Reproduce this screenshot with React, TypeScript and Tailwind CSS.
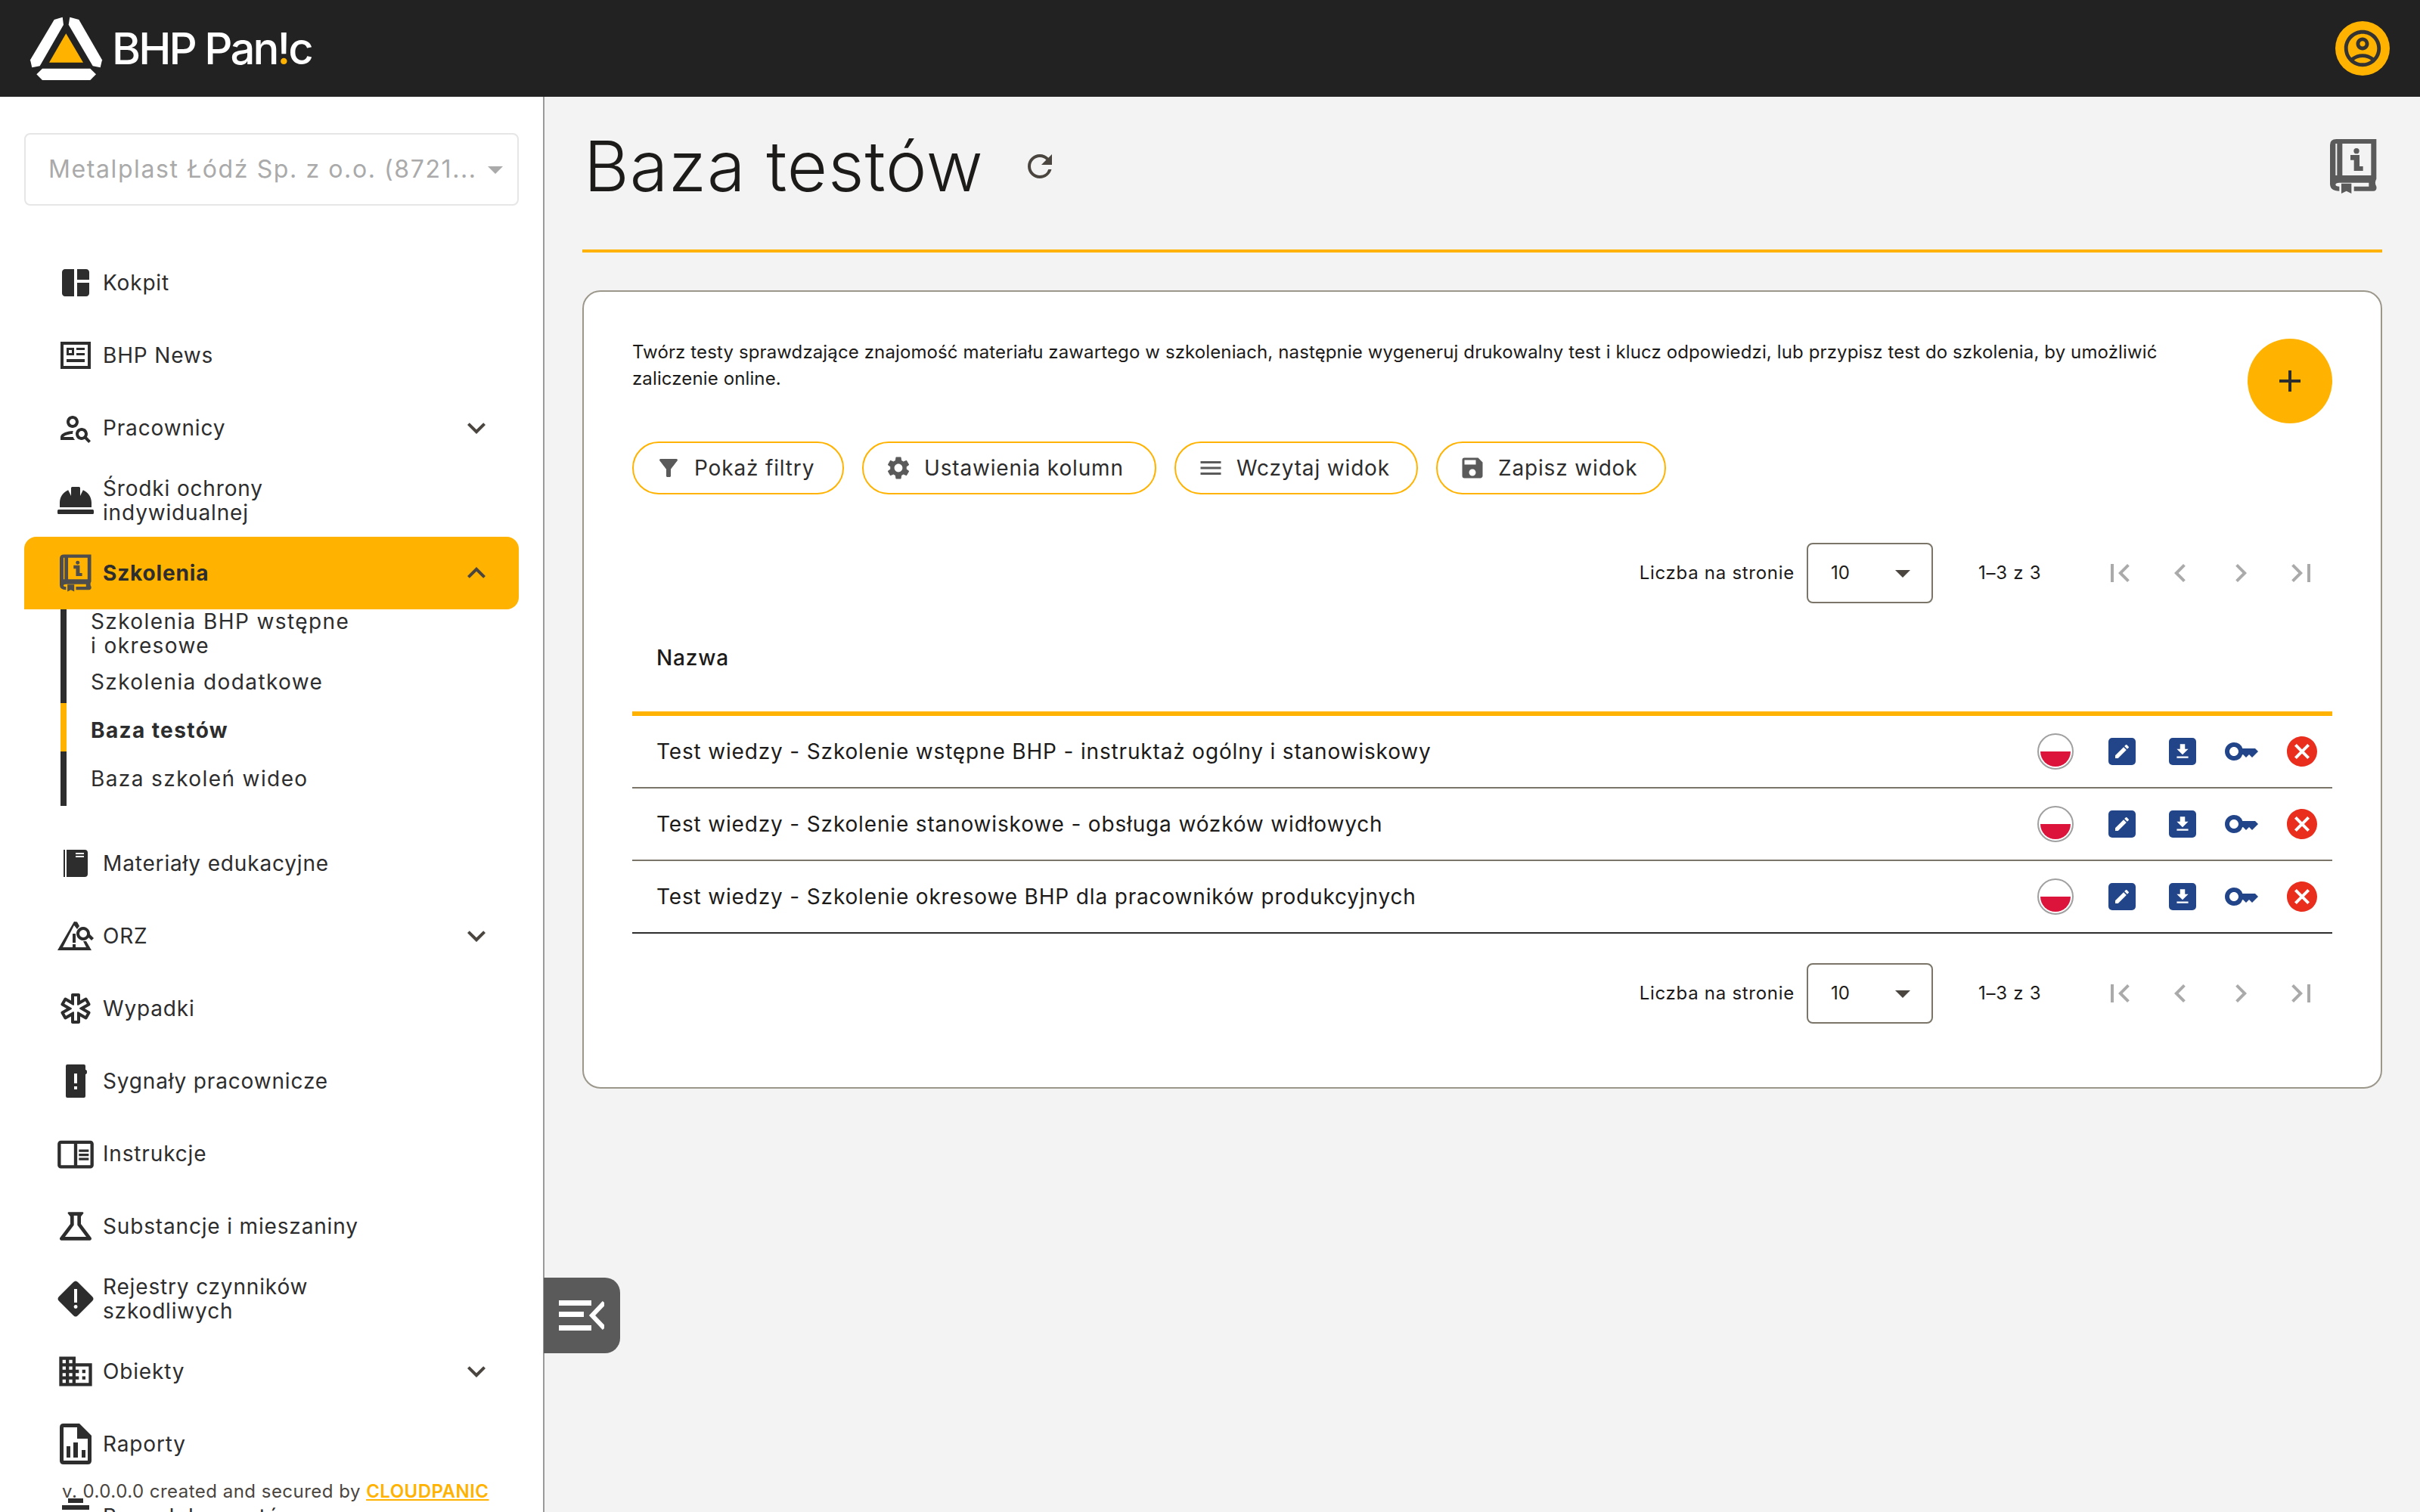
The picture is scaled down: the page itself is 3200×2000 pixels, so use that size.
import React from "react";
import {
  MdSpaceDashboard, MdOutlinePersonSearch, MdOutlineChromeReaderMode, MdOutlineScience, MdDomain,
  MdOutlineEmergency, MdExpandMore, MdExpandLess, MdRefresh, MdFilterAlt, MdSettings, MdMenu, MdSave,
  MdFirstPage, MdLastPage, MdChevronLeft, MdChevronRight, MdEdit, MdFileDownload, MdKey, MdCancel,
  MdArrowDropDown, MdOutlineAccountCircle, MdAdd,
} from "react-icons/md";
import { FaHardHat } from "react-icons/fa";

const BookInfo = ({ className }: { className: string }) => (
  <svg viewBox="543 580 186 220" className={className} fill="currentColor">
    <path
      fillRule="evenodd"
      d="M568 582H727V740Q718 755 727 770Q730 788 715 788H638V770H697V755H580Q565 755 565 763Q565 770 580 770V788Q543 788 543 760V605Q543 582 568 582ZM592 600V726H706V600ZM565 600V726H571V600Z"
    />
    <path d="M588 758H628V798L608 788L588 798Z" />
    <circle cx="648" cy="629" r="11" />
    <path d="M624 645H660V690H674V708H638V665H624Z" />
  </svg>
);

const NewsIcon = () => (
  <svg viewBox="0 0 48 48" className="w-[48px] h-[48px]" fill="currentColor">
    <path fillRule="evenodd" d="M4 6H44V42H4ZM8 10V38H40V10Z" />
    <path fillRule="evenodd" d="M12 14H22V24H12ZM15 17V21H19V17Z" />
    <path d="M25 14H36V17H25ZM25 21H36V24H25ZM12 29H36V33H12Z" />
  </svg>
);

const ManualIcon = () => (
  <svg viewBox="0 0 48 48" className="w-[48px] h-[48px]" fill="currentColor">
    <path d="M8 6H10V42H8Z" />
    <path fillRule="evenodd" d="M12 6H36Q40 6 40 10V38Q40 42 36 42H12ZM24 10V12H35V10ZM24 14V16H35V14Z" />
  </svg>
);

const OrzIcon = () => (
  <svg viewBox="0 0 48 48" className="w-[48px] h-[48px]" fill="currentColor">
    <path d="M22 4L26 4.5L29 10L26 14L22 9L7 38H38L34 30L38 30L45 42H0Z" transform="translate(0 1)" />
    <path d="M20 21H24V33H20ZM20 35H24V39H20Z" />
    <path fillRule="evenodd" d="M34 12A9 9 0 1 1 33.9 12ZM34 16A5 5 0 1 0 34.1 16Z" />
    <path d="M39 24L42 21L48 27L45 30Z" />
  </svg>
);

const SignalIcon = () => (
  <svg viewBox="0 0 48 48" className="w-[48px] h-[48px]" fill="currentColor">
    <path fillRule="evenodd" d="M13 2H35Q37 2 37 4V9Q39 9 39 12Q39 15 37 15V44Q37 46 35 46H13Q11 46 11 44V4Q11 2 13 2ZM22 14V27H26V14ZM22 31V35H26V31Z" />
  </svg>
);

const DiamondIcon = () => (
  <svg viewBox="0 0 48 48" className="w-[48px] h-[48px]" fill="currentColor">
    <path fillRule="evenodd" d="M21 2Q24 -1 27 2L46 21Q49 24 46 27L27 46Q24 49 21 46L2 27Q-1 24 2 21ZM22 11V29H26V11ZM24 32A2.5 2.5 0 1 0 24.1 37A2.5 2.5 0 1 0 24 32Z" />
  </svg>
);

const ReportIcon = () => (
  <svg viewBox="0 0 42 54" className="w-[42px] h-[54px]" fill="currentColor">
    <path fillRule="evenodd" d="M5 0H26L42 16V49Q42 54 37 54H5Q0 54 0 49V5Q0 0 5 0ZM5 5V49H37V20H23V5Z" />
    <path d="M9 30H14V45H9ZM18 25H24V45H18ZM29 35H34V45H29Z" />
  </svg>
);

const StackIcon = () => (
  <svg viewBox="0 0 48 48" className="w-[48px] h-[48px]" fill="currentColor">
    <path d="M14 0H34V6H14ZM6 9H42V15H6ZM0 18H48V24H0Z" />
  </svg>
);

type Item = { label: string; icon: React.ReactNode; chevron?: boolean };

const before: Item[] = [
  { label: "Kokpit", icon: <MdSpaceDashboard size={48} /> },
  { label: "BHP News", icon: <NewsIcon /> },
  { label: "Pracownicy", icon: <MdOutlinePersonSearch size={48} />, chevron: true },
  { label: "Środki ochrony indywidualnej", icon: <FaHardHat size={48} /> },
];

const after: Item[] = [
  { label: "Materiały edukacyjne", icon: <ManualIcon /> },
  { label: "ORZ", icon: <OrzIcon />, chevron: true },
  { label: "Wypadki", icon: <MdOutlineEmergency size={48} /> },
  { label: "Sygnały pracownicze", icon: <SignalIcon /> },
  { label: "Instrukcje", icon: <MdOutlineChromeReaderMode size={52} /> },
  { label: "Substancje i mieszaniny", icon: <MdOutlineScience size={56} /> },
  { label: "Rejestry czynników szkodliwych", icon: <DiamondIcon /> },
  { label: "Obiekty", icon: <MdDomain size={52} />, chevron: true },
  { label: "Raporty", icon: <ReportIcon /> },
  { label: "Baza dokumentów", icon: <StackIcon /> },
];

const NavItem = ({ item }: { item: Item }) => (
  <div className="flex items-center h-[96px] flex-none pl-[32px] pr-[32px] w-[654px] text-[#2d2d2d]">
    <div className="w-[72px] flex-none flex justify-center items-center pr-[0px] -ml-[0px] h-[56px]">{item.icon}</div>
    <span className="ml-[0px] flex-1 text-[28px] leading-[32px] tracking-[0.03em] max-w-[360px]">{item.label}</span>
    {item.chevron && <MdExpandMore size={48} className="ml-auto text-[#4a453f]" />}
  </div>
);

const Pagination = () => (
  <div className="flex items-center justify-end h-[80px] text-[#1c1b19]">
    <span className="text-[24px] tracking-[0.03em] mr-[16px]">Liczba na stronie</span>
    <div className="w-[167px] h-[80px] border-2 border-[#7a7568] rounded-[8px] flex items-center pl-[30px] pr-[14px] justify-between">
      <span className="text-[24px]">10</span>
      <MdArrowDropDown size={48} className="text-[#4a453f]" />
    </div>
    <span className="text-[24px] tracking-[0.03em] ml-[60px] w-[106px]">1–3 z 3</span>
    <div className="flex items-center gap-[32px] text-[#aaaaaa] ml-[57px] mr-[17px]">
      <MdFirstPage size={48} />
      <MdChevronLeft size={48} />
      <MdChevronRight size={48} />
      <MdLastPage size={48} />
    </div>
  </div>
);

const rows = [
  "Test wiedzy - Szkolenie wstępne BHP - instruktaż ogólny i stanowiskowy",
  "Test wiedzy - Szkolenie stanowiskowe - obsługa wózków widłowych",
  "Test wiedzy - Szkolenie okresowe BHP dla pracowników produkcyjnych",
];

const Btn = ({ icon, label, w }: { icon: React.ReactNode; label: string; w: string }) => (
  <button className={`${w} h-[70px] rounded-full border-2 border-[#ffb300] flex items-center pl-[26px] text-[28px] tracking-[0.03em] text-[#1c1b19] text-[#2d2d2d]`}>
    <span className="text-[#5a5a5a] w-[40px] flex-none flex justify-center">{icon}</span>
    <span className="ml-[14px]">{label}</span>
  </button>
);

export default function App() {
  return (
    <div className="w-[3200px] h-[2000px] overflow-hidden flex flex-col bg-[#f3f3f3] font-['Inter',sans-serif] relative">
      <header className="h-[128px] flex-none bg-[#222222] flex items-center pr-[40px]">
        <svg viewBox="0 0 140 128" className="w-[140px] h-[128px] flex-none">
          <path fill="#fff" d="M71.7 26L82.7 22.7L84 32.7L52.7 87.3L42.3 89.3L40 79.3Z" />
          <path fill="#fff" d="M92.3 22.7L104.3 26L135 79.3L132.7 89.3L122.7 87.3L90.7 32.7Z" />
          <path fill="#ffb300" d="M87.3 44.3L110 82.7H65Z" />
          <path fill="#fff" d="M48.3 98.3L56 90.7H119.3L127 98.3L119.3 106H56Z" />
        </svg>
        <div className="ml-[8px] text-white text-[58px] leading-none font-medium tracking-[-0.05em]">
          BHP Pan
          <span className="bg-[linear-gradient(#fff_0,#fff_66%,#ffb300_66%)] bg-clip-text text-transparent">!</span>c
        </div>
        <div className="ml-auto w-[72px] h-[72px] rounded-full bg-[#ffb300] flex items-center justify-center text-[#333333]">
          <MdOutlineAccountCircle size={58} />
        </div>
      </header>

      <div className="flex flex-1 min-h-0 relative">
        <aside className="w-[720px] flex-none bg-white border-r-2 border-[#9a9a9a] overflow-hidden relative flex flex-col pl-[32px]">
          <div className="mt-[48px] w-[654px] h-[96px] flex-none border-2 border-[#e6e6e6] rounded-[8px] flex items-center pl-[30px] pr-[18px] text-[#aaaaaa] text-[32px] tracking-[0.05em]">
            <span className="whitespace-nowrap">Metalplast Łódź Sp. z o.o. (8721...</span>
            <MdArrowDropDown size={48} className="ml-auto text-[#aaaaaa] flex-none" />
          </div>
          <nav className="mt-[54px] flex flex-col">
            {before.map((i) => <NavItem key={i.label} item={i} />)}
            <div className="flex items-center h-[96px] flex-none pl-[32px] pr-[32px] w-[654px] bg-[#ffb300] rounded-t-[16px] rounded-br-[16px] text-[#2d2d2d]">
              <div className="w-[72px] flex-none flex justify-center items-center"><BookInfo className="w-[42px] h-[50px] text-[#4d4d4d]" /></div>
              <span className="text-[28px] font-bold tracking-[0.03em]">Szkolenia</span>
              <MdExpandLess size={48} className="ml-auto text-[#4a453f]" />
            </div>
            <div className="ml-[48px] flex flex-col text-[#2d2d2d] text-[28px] leading-[32px] tracking-[0.05em]">
              <div className="h-[60px] border-l-[8px] border-[#2d2d2d] pl-[32px]">Szkolenia BHP wstępne<br />i okresowe</div>
              <div className="h-[64px] border-l-[8px] border-[#2d2d2d] pl-[32px] flex items-center pt-[8px]">Szkolenia dodatkowe</div>
              <div className="h-[64px] border-l-[8px] border-[#ffb300] pl-[32px] flex items-center pt-[8px] font-bold">Baza testów</div>
              <div className="h-[72px] border-l-[8px] border-[#2d2d2d] pl-[32px] flex items-center">Baza szkoleń wideo</div>
            </div>
            <div className="h-[28px] flex-none" />
            {after.map((i) => <NavItem key={i.label} item={i} />)}
          </nav>
          <div className="absolute left-[82px] top-[1827px] text-[24px] leading-[36px] tracking-[0.02em] text-[#4a453f] whitespace-nowrap">
            v. 0.0.0.0 created and secured by <a className="text-[#ffb300] font-semibold underline">CLOUDPANIC</a>
          </div>
        </aside>

        <div className="absolute left-[719px] top-[1562px] w-[101px] h-[100px] rounded-r-[20px] bg-[#5a5a5a] flex items-center justify-center pr-[2px]">
          <svg viewBox="0 0 60 40" className="w-[60px] h-[40px]" fill="#fff">
            <path d="M0 0H43V7H0ZM0 15H33V22H0ZM0 33H43V40H0Z" />
            <path d="M60 3L44 20L60 37" fill="none" stroke="#fff" strokeWidth="6" />
          </svg>
        </div>

        <main className="flex-1 min-w-0 px-[50px] flex flex-col">
          <div className="h-[206px] flex-none border-b-[4px] border-[#ffb300] flex items-center text-[#1c1b19] pb-[18px]">
            <h1 className="ml-[2px] text-[92px] leading-none font-light tracking-[0.01em]">Baza testów</h1>
            <MdRefresh size={48} className="ml-[50px] text-[#4a453f]" />
            <BookInfo className="ml-auto mr-[7px] w-[62px] h-[74px] text-[#5a5a5a]" />
          </div>

          <section className="mt-[50px] h-[1056px] flex-none bg-white border-2 border-[#9b978b] rounded-[24px] px-[64px] pt-[62px]">
            <div className="flex items-start justify-between">
              <p className="w-[2070px] text-[24px] leading-[35px] tracking-[0.005em] text-[#1c1b19]">
                Twórz testy sprawdzające znajomość materiału zawartego w szkoleniach, następnie wygeneruj drukowalny test i klucz odpowiedzi, lub przypisz test do szkolenia, by umożliwić zaliczenie online.
              </p>
              <button className="w-[112px] h-[112px] rounded-full bg-[#ffb300] flex items-center justify-center text-[#2d2d2d]">
                <MdAdd size={48} />
              </button>
            </div>
            <div className="mt-[24px] flex gap-[24px]">
              <Btn w="w-[280px]" icon={<MdFilterAlt size={36} />} label="Pokaż filtry" />
              <Btn w="w-[389px]" icon={<MdSettings size={36} />} label="Ustawienia kolumn" />
              <Btn w="w-[322px]" icon={<MdMenu size={36} />} label="Wczytaj widok" />
              <Btn w="w-[304px]" icon={<MdSave size={36} />} label="Zapisz widok" />
            </div>
            <div className="mt-[64px]"><Pagination /></div>
            <div className="h-[149px] border-b-[6px] border-[#ffb300] flex items-center px-[32px] text-[28px] font-medium tracking-[0.03em] text-[#1c1b19]">Nazwa</div>
            {rows.map((r, i) => (
              <div key={r} className={`h-[96px] border-b-2 flex items-center pl-[32px] text-[28px] tracking-[0.03em] text-[#1c1b19] ${i === 2 ? "border-[#2d2d2d]" : "border-[#7a7568]"}`}>
                <span>{r}</span>
                <div className="ml-auto flex items-center">
                  <div className="w-[48px] h-[48px] rounded-full border-2 border-[#a0a0a0] p-[2px] flex-none">
                    <div className="w-full h-full rounded-full bg-[linear-gradient(#fff_50%,#dc143c_50%)]" />
                  </div>
                  <div className="w-[36px] h-[36px] ml-[46px] rounded-[5px] bg-[#22458a] flex items-center justify-center text-white"><MdEdit size={24} /></div>
                  <div className="w-[36px] h-[36px] ml-[44px] rounded-[5px] bg-[#22458a] flex items-center justify-center text-white"><MdFileDownload size={26} /></div>
                  <MdKey size={48} className="ml-[36px] text-[#22458a]" />
                  <MdCancel size={48} className="ml-[32px] mr-[16px] text-[#e92e1e]" />
                </div>
              </div>
            ))}
            <div className="mt-[39px]"><Pagination /></div>
          </section>
        </main>
      </div>
    </div>
  );
}
